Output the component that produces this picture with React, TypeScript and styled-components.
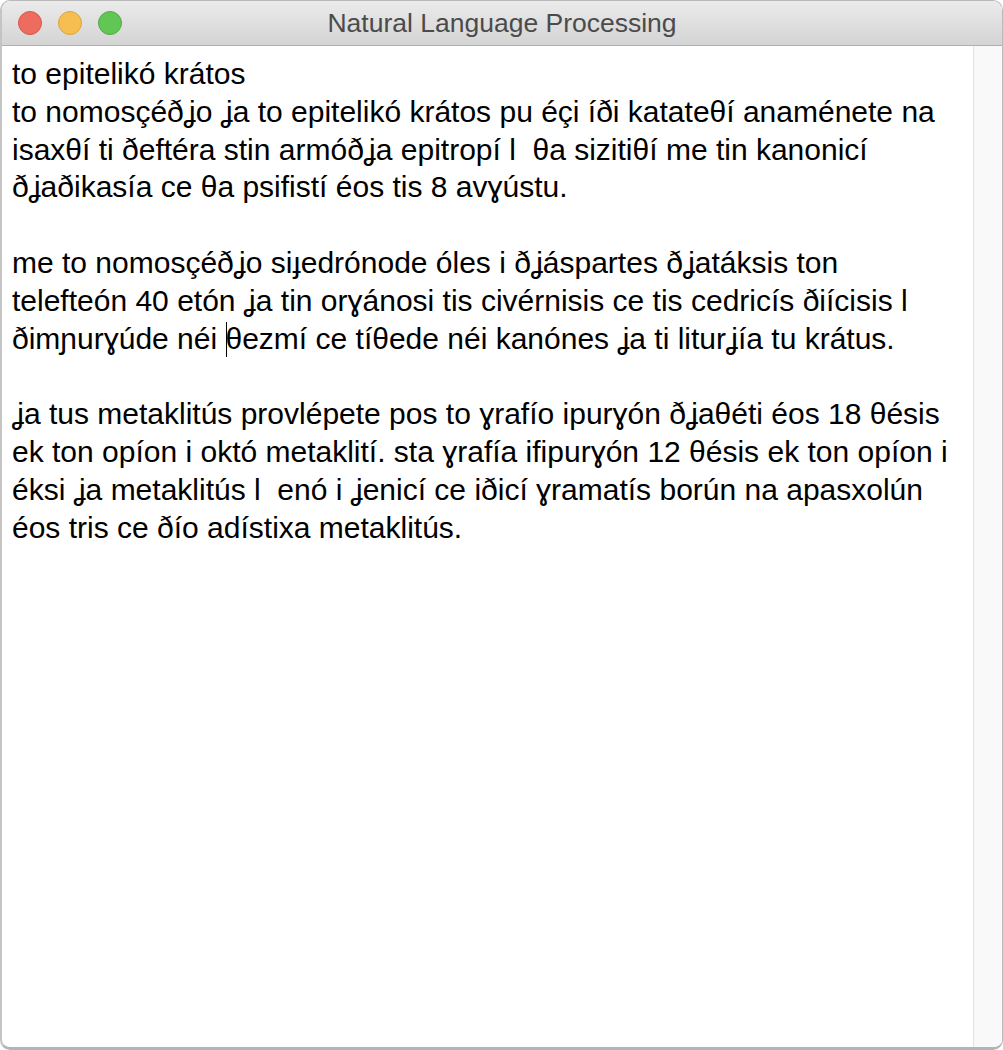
import React from "react";
import styled, { createGlobalStyle } from "styled-components";

const GlobalStyle = createGlobalStyle`
  html, body { margin: 0; padding: 0; background: #ffffff; }
  * { box-sizing: border-box; }
`;

const Window = styled.div`
  width: 1003px;
  height: 1050px;
  display: flex;
  flex-direction: column;
  border: 1px solid #b9b9b9;
  border-left: 2px solid #c4c4c4;
  border-bottom: 3px solid #b4b4b4;
  border-radius: 10px;
  overflow: hidden;
  background: #ffffff;
`;

const TitleBar = styled.div`
  height: 45px;
  flex: none;
  display: grid;
  grid-template-columns: 1fr auto 1fr;
  align-items: center;
  background: linear-gradient(#ebebeb, #d4d4d4);
  border-bottom: 1px solid #b0b0b0;
`;

const Lights = styled.div`
  display: flex;
  gap: 16px;
  padding-left: 16px;
`;

const Light = styled.span<{ $fill: string; $edge: string }>`
  width: 24px;
  height: 24px;
  border-radius: 50%;
  background: ${(p) => p.$fill};
  border: 1px solid ${(p) => p.$edge};
`;

const Title = styled.div`
  font-family: "Liberation Sans", Arial, sans-serif;
  font-size: 26.5px;
  color: #4b4b4b;
  padding-top: 1px;
`;

const Body = styled.div`
  flex: 1;
  display: flex;
  min-height: 0;
`;

const Editor = styled.div`
  flex: 1;
  padding: 9px 10px;
  font-family: "Liberation Sans", Arial, "DejaVu Sans", sans-serif;
  font-size: 30px;
  line-height: 37.8px;
  color: #000000;
`;

const Paragraph = styled.div`
  margin-bottom: 37.8px;
`;

const Line = styled.div`
  white-space: pre;
`;

const Caret = styled.span`
  display: inline-block;
  width: 0;
  height: 35px;
  border-left: 1.5px solid #000;
  vertical-align: -8px;
  margin-right: -1px;
`;

const Scrollbar = styled.div`
  width: 29px;
  flex: none;
  background: #f9f9f9;
  border-left: 1px solid #e3e3e3;
`;

const paragraphs: string[][] = [
  [
    "to epitelikó krátos",
    "to nomosçéðʝo ʝa to epitelikó krátos pu éçi íði katateθí anaménete na",
    "isaxθí ti ðeftéra stin armóðʝa epitropí l  θa sizitiθí me tin kanonicí",
    "ðʝaðikasía ce θa psifistí éos tis 8 avɣústu.",
  ],
  [
    "me to nomosçéðʝo siɟedrónode óles i ðʝáspartes ðʝatáksis ton",
    "telefteón 40 etón ʝa tin orɣánosi tis civérnisis ce tis cedricís ðiícisis l",
    "CARET",
  ],
  [
    "ʝa tus metaklitús provlépete pos to ɣrafío ipurɣón ðʝaθéti éos 18 θésis",
    "ek ton opíon i októ metaklití. sta ɣrafía ifipurɣón 12 θésis ek ton opíon i",
    "éksi ʝa metaklitús l  enó i ʝenicí ce iðicí ɣramatís borún na apasxolún",
    "éos tris ce ðío adístixa metaklitús.",
  ],
];

export default function App() {
  return (
    <>
      <GlobalStyle />
      <Window>
        <TitleBar>
          <Lights>
            <Light $fill="#ee6b5f" $edge="#d9564c" />
            <Light $fill="#f6be50" $edge="#dba441" />
            <Light $fill="#62c655" $edge="#52a944" />
          </Lights>
          <Title>Natural Language Processing</Title>
          <div />
        </TitleBar>
        <Body>
          <Editor>
            {paragraphs.map((lines, i) => (
              <Paragraph key={i}>
                {lines.map((l, j) =>
                  l === "CARET" ? (
                    <Line key={j}>
                      ðimɲurɣúde néi <Caret />θezmí ce tíθede néi kanónes ʝa ti liturʝía tu krátus.
                    </Line>
                  ) : (
                    <Line key={j}>{l}</Line>
                  )
                )}
              </Paragraph>
            ))}
          </Editor>
          <Scrollbar />
        </Body>
      </Window>
    </>
  );
}
